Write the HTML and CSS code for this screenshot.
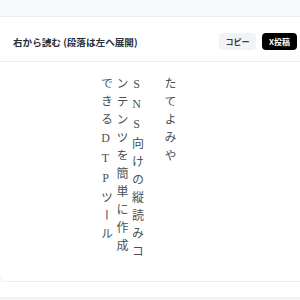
FILE: index.html
```html
<!DOCTYPE html>
<html lang="ja">
<head>
	<meta charset="utf-8">
	<title>縦書きプレビュー</title>
	<link rel="stylesheet" href="styles.css">
</head>
<body>
	<section class="card">
		<header class="card-head">
			<h2 class="card-title">右から読む (段落は左へ展開)</h2>
			<div class="actions">
				<button class="btn btn-copy">コピー</button>
				<button class="btn btn-post">X投稿</button>
			</div>
		</header>
		<div class="preview">
			<div class="tate">
				<p>たてよみや</p>
				<p><span class="up">SNS</span>向けの縦読みコンテンツを簡単に作成できる<span class="up">DTP</span>ツール</p>
			</div>
		</div>
	</section>
	<section class="next"></section>
</body>
</html>
```

FILE: styles.css
```css
body {
	margin: 0;
	background-color: #f7f8fa;
	font-family: "Noto Sans CJK JP", "Noto Sans", sans-serif;
	overflow: hidden;
}
.card {
	margin: 16px -14px 0 -1px;
	border-top: 1px solid #eceef2;
	background-color: #fff;
	padding-bottom: 15px;
}
.card-head {
	display: flex;
	align-items: center;
	justify-content: space-between;
	padding: 16px 17px 11px 14px;
}
.card-title {
	margin: 0;
	font-size: 9.6px;
	font-weight: 700;
	color: #2b2f36;
}
.actions {
	display: flex;
	gap: 6px;
}
.btn {
	border: none;
	border-radius: 4px;
	height: 17px;
	padding: 0;
	white-space: nowrap;
	font-family: inherit;
	font-size: 8px;
	font-weight: 700;
}
.btn-copy {
	width: 37px;
	background-color: #f1f3f7;
	color: #3a3f47;
}
.btn-post {
	width: 35px;
	background-color: #000;
	color: #fff;
}
.preview {
	display: flex;
	justify-content: center;
	height: 219px;
	border: 1px solid #eceef2;
	border-radius: 0 0 6px 6px;
	padding-right: 57px;
}
.tate {
	writing-mode: vertical-rl;
	height: 190px;
	margin-top: 15px;
	font-family: "Liberation Serif", "Noto Sans CJK JP", serif;
	font-size: 12px;
	line-height: 15.5px;
	letter-spacing: 6px;
	color: #4a4f57;
}
.tate p {
	margin: 0 0 0 17px;
}
.up {
	text-orientation: upright;
}
.next {
	height: 20px;
	border-top: 1px solid #eceef2;
	background-color: #f3f4f7;
}
```
